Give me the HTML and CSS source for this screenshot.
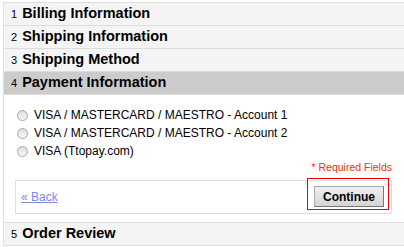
FILE: index.html
```html
<!DOCTYPE html>
<html lang="en">
<head>
    <meta charset="UTF-8">
    <title>Checkout</title>
    <link rel="stylesheet" href="styles.css">
</head>
<body>
    <ol class="checkout">
        <li class="step">
            <div class="step-title"><span class="num">1</span> <h2>Billing Information</h2></div>
        </li>
        <li class="step">
            <div class="step-title"><span class="num">2</span> <h2>Shipping Information</h2></div>
        </li>
        <li class="step">
            <div class="step-title"><span class="num">3</span> <h2>Shipping Method</h2></div>
        </li>
        <li class="step active">
            <div class="step-title"><span class="num">4</span> <h2>Payment Information</h2></div>
            <div class="step-body">
                <ul class="methods">
                    <li><input type="radio" name="pay" id="p1"> <label for="p1">VISA / MASTERCARD / MAESTRO - Account 1</label></li>
                    <li><input type="radio" name="pay" id="p2"> <label for="p2">VISA / MASTERCARD / MAESTRO - Account 2</label></li>
                    <li><input type="radio" name="pay" id="p3"> <label for="p3">VISA (Ttopay.com)</label></li>
                </ul>
                <p class="required">* Required Fields</p>
                <div class="buttons">
                    <a href="#" class="back">&laquo; Back</a>
                    <span class="highlight"><button class="continue">Continue</button></span>
                </div>
            </div>
        </li>
        <li class="step">
            <div class="step-title"><span class="num">5</span> <h2>Order Review</h2></div>
        </li>
    </ol>
</body>
</html>
```

FILE: styles.css
```css
body {
    font-family: "Liberation Sans", Arial, sans-serif;
    margin: 0;
    padding: 2px 0 0 3px;
    background: #fff;
    color: #000;
}
.checkout {
    list-style: none;
    margin: 0;
    padding: 0;
    border-left: 1px solid #ddd;
}
.step-title {
    display: flex;
    align-items: baseline;
    gap: 5px;
    height: 22px;
    padding: 0 0 0 7px;
    background: #f4f4f4;
    border-top: 1px solid #ddd;
    line-height: 21px;
}
.step:last-child .step-title {
    border-bottom: 1px solid #ddd;
}
.active .step-title {
    background: #ccc;
}
.num {
    font-size: 11px;
}
.step-title h2 {
    margin: 0;
    font-size: 14.5px;
    font-weight: bold;
}
.step-body {
    background: #fff;
    border-top: 1px solid #ddd;
    padding: 11px 12px 8px 11px;
}
.methods {
    list-style: none;
    margin: 0;
    padding: 0;
}
.methods li {
    display: flex;
    align-items: center;
    height: 18px;
    font-size: 12px;
}
.methods input {
    appearance: none;
    -webkit-appearance: none;
    box-sizing: border-box;
    margin: 0 6px 0 2px;
    width: 11px;
    height: 11px;
    border: 1px solid #a8a8a8;
    border-radius: 50%;
    background: linear-gradient(#dcdcdc, #f8f8f8);
}
.required {
    margin: 1px 0 7px;
    text-align: right;
    font-size: 10.5px;
    color: #eb340a;
}
.buttons {
    display: flex;
    justify-content: space-between;
    align-items: center;
    height: 32px;
    border: 1px solid #ddd;
    padding: 0 0 0 5px;
}
.back {
    font-size: 12px;
    color: #7a88e8;
}
.highlight {
    align-self: flex-start;
    display: flex;
    border: 1px solid #e00;
    padding: 7px 4px 2px 6px;
    margin: -3px 2px 0 0;
}
.continue {
    font-family: "Liberation Sans", Arial, sans-serif;
    font-size: 12px;
    font-weight: bold;
    line-height: 14px;
    padding: 3px 8px 2px;
    background: linear-gradient(#f0f0f0, #d4d4d4);
    border: 1px solid #aaa;
    border-right-color: #777;
    border-bottom-color: #777;
}
```
